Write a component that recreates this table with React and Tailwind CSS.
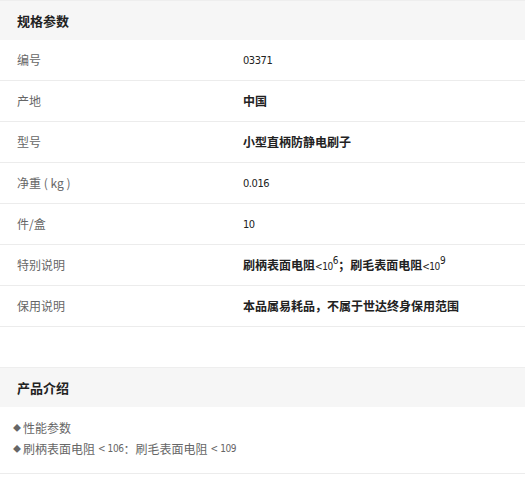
import React from 'react';

const rows = [
    { label: '编号', value: '03371' },
    { label: '产地', value: '中国', bold: true },
    { label: '型号', value: '小型直柄防静电刷子', bold: true },
    { label: '净重 ( kg )', value: '0.016' },
    { label: '件/盒', value: '10' },
    { label: '特别说明', special: true },
    { label: '保用说明', value: '本品属易耗品，不属于世达终身保用范围', bold: true },
];

// narrow digits, like the condensed face in the reference
const num = "font-['DejaVu_Sans_Condensed','Liberation_Sans_Narrow','Roboto','Noto_Sans_CJK_SC',sans-serif] tracking-[-0.04em]";

const Resistance = () => (
    <span className="font-bold text-[#222]">
        刷柄表面电阻<span className={`${num} font-normal text-[10px]`}>&lt;10<sup className="text-[10px] -top-[0.6em]">6</sup></span>
        ；刷毛表面电阻<span className={`${num} font-normal text-[10px]`}>&lt;10<sup className="text-[10px] -top-[0.6em]">9</sup></span>
    </span>
);

const App = () => {
    return (
        <div className="w-[525px] min-h-[490px] bg-white font-['Noto_Sans_CJK_SC','Noto_Sans',sans-serif] text-xs">
            <div className="border-t border-[#eeeeee] h-10 bg-[#f6f6f6] flex items-center pl-[17px] text-[13px] font-bold text-[#222]">
                规格参数
            </div>
            {rows.map((r) => (
                <div key={r.label} className="h-[41px] border-b border-[#ececec] flex items-center">
                    <div className="w-[243px] pl-[17px] text-[#666]">{r.label}</div>
                    <div className="flex-1">
                        {r.special ? <Resistance /> : (
                            <span className={r.bold ? 'font-bold text-[#222]' : `${num} text-[11px] text-[#222]`}>{r.value}</span>
                        )}
                    </div>
                </div>
            ))}
            <div className="h-10" />
            <div className="border-t border-[#eeeeee] h-10 bg-[#f6f6f6] flex items-center pl-[17px] text-[13px] font-bold text-[#222]">
                产品介绍
            </div>
            <div className="pt-[10px] pb-[14px] pl-[13px] border-b border-[#ececec] text-[#666] leading-[21px]">
                <div className="flex items-center">
                    <span className="text-[8px] mr-[2px]">◆</span>性能参数
                </div>
                <div className="flex items-center">
                    <span className="text-[8px] mr-[2px]">◆</span>刷柄表面电阻
                    <span className={`${num} text-[10px] ml-[3px]`}>&lt; 106</span>：刷毛表面电阻
                    <span className={`${num} text-[10px] ml-[3px]`}>&lt; 109</span>
                </div>
            </div>
        </div>
    );
};

export default App;
